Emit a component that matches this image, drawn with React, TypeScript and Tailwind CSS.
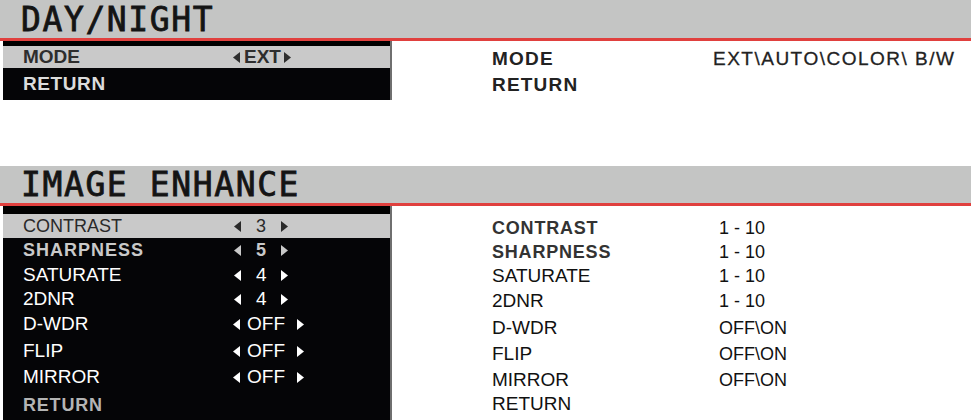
import React from "react";

type Row = {
  label: string;
  value?: string;
  kind?: "num" | "off" | "ext";
  h: number;
  tone: "light" | "white" | "dim" | "muted" | "strong" | "heavy";
};

function Left() {
  return (
    <svg width="7" height="11" viewBox="0 0 7 11" className="shrink-0">
      <path d="M7 0 L0 5.5 L7 11 Z" fill="currentColor" />
    </svg>
  );
}

function Right() {
  return (
    <svg width="7" height="11" viewBox="0 0 7 11" className="shrink-0">
      <path d="M0 0 L7 5.5 L0 11 Z" fill="currentColor" />
    </svg>
  );
}

function Value({ row }: { row: Row }) {
  if (!row.value) return null;
  if (row.kind === "num") {
    return (
      <div className="flex items-center">
        <span className="ml-[2px]"><Left /></span>
        <span className="ml-[15px] w-[10px] text-center">{row.value}</span>
        <span className="ml-[15px]"><Right /></span>
      </div>
    );
  }
  if (row.kind === "ext") {
    return (
      <div className="flex items-center">
        <span className="ml-[1px]"><Left /></span>
        <span className="ml-[4px]">{row.value}</span>
        <span className="ml-[3px]"><Right /></span>
      </div>
    );
  }
  return (
    <div className="flex items-center">
      <span className="ml-[1px]"><Left /></span>
      <span className="ml-[7px]">{row.value}</span>
      <span className="ml-[12px]"><Right /></span>
    </div>
  );
}

const toneClass = {
  light: "bg-[#c9c9c9] text-[#2a2a2a] text-[18px]",
  strong: "bg-[#c9c9c9] text-[#2e2e2e] text-[19px] font-bold",
  heavy: "bg-[#050507] text-[#dcdcdc] text-[19px] font-bold tracking-[0.6px]",
  white: "bg-[#050507] text-white text-[19px]",
  dim: "bg-[#050507] text-[#c9c9c9] text-[18px] font-bold tracking-[1px]",
  muted: "bg-[#050507] text-[#b4b4b4] text-[18px] font-bold tracking-[0.8px]",
};

function Menu({ top, rows }: { top: number; rows: Row[] }) {
  return (
    <div className="ml-[3px] w-[389px] self-start border-r-2 border-[#6f6f6f]">
      <div className="bg-black" style={{ height: top }} />
      {rows.map((r) => (
        <div
          key={r.label}
          className={`flex items-center pl-[20px] ${toneClass[r.tone]}`}
          style={{ height: r.h }}
        >
          <span className="w-[209px]">{r.label}</span>
          <Value row={r} />
        </div>
      ))}
    </div>
  );
}

function Header({ title, h }: { title: string; h: number }) {
  return (
    <>
      <div
        className="flex items-end bg-[#c4c5c4] pb-[2px] pl-[21px] text-[33px] leading-none tracking-[1.6px] text-[#141414] [-webkit-text-stroke:0.8px_#141414]"
        style={{ height: h, fontFamily: '"DejaVu Sans Mono", "Liberation Mono", monospace' }}
      >
        {title}
      </div>
      <div className="h-[3px] bg-[#e0403e]" />
    </>
  );
}

const enhanceRows: Row[] = [
  { label: "CONTRAST", value: "3", kind: "num", h: 24, tone: "light" },
  { label: "SHARPNESS", value: "5", kind: "num", h: 25, tone: "dim" },
  { label: "SATURATE", value: "4", kind: "num", h: 24, tone: "white" },
  { label: "2DNR", value: "4", kind: "num", h: 24, tone: "white" },
  { label: "D-WDR", value: "OFF", kind: "off", h: 27, tone: "white" },
  { label: "FLIP", value: "OFF", kind: "off", h: 26, tone: "white" },
  { label: "MIRROR", value: "OFF", kind: "off", h: 26, tone: "white" },
  { label: "RETURN", h: 30, tone: "muted" },
];

const enhanceInfo = [
  { label: "CONTRAST", range: "1 - 10", h: 24, bold: true },
  { label: "SHARPNESS", range: "1 - 10", h: 24, bold: true },
  { label: "SATURATE", range: "1 - 10", h: 25 },
  { label: "2DNR", range: "1 - 10", h: 24 },
  { label: "D-WDR", range: "OFF\\ON", h: 30 },
  { label: "FLIP", range: "OFF\\ON", h: 22 },
  { label: "MIRROR", range: "OFF\\ON", h: 30 },
  { label: "RETURN", range: "", h: 18 },
];

export default function App() {
  return (
    <div
      className="relative h-[420px] w-[971px] overflow-hidden bg-white text-[#1a1a1a]"
      style={{ fontFamily: '"Liberation Sans", Arial, sans-serif' }}
    >
      {/* day / night */}
      <section className="h-[166px]">
        <Header title="DAY/NIGHT" h={38} />
        <div className="flex">
          <Menu
            top={5}
            rows={[
              { label: "MODE", value: "EXT", kind: "ext", h: 22, tone: "strong" },
              { label: "RETURN", h: 32, tone: "heavy" },
            ]}
          />
          <div className="pl-[100px] pt-[5px] text-[19px] font-bold tracking-[1.2px] text-[#222]">
            <div className="flex h-[26px] items-center">
              <span className="w-[221px]">MODE</span>
              <span className="font-normal tracking-[1.5px] [-webkit-text-stroke:0.3px_#222]">EXT\AUTO\COLOR\ B/W</span>
            </div>
            <div className="flex h-[26px] items-center">RETURN</div>
          </div>
        </div>
      </section>

      {/* image enhance */}
      <section>
        <Header title="IMAGE ENHANCE" h={37} />
        <div className="flex">
          <Menu top={8} rows={enhanceRows} />
          <div className="pl-[100px] pt-[10px] text-[19px] text-[#111]">
            {enhanceInfo.map((r) => (
              <div key={r.label} className="flex items-center" style={{ height: r.h }}>
                <span className={`w-[227px] ${r.bold ? "text-[18px] font-bold tracking-[0.8px] text-[#333]" : ""}`}>
                  {r.label}
                </span>
                <span className="text-[18px]">{r.range}</span>
              </div>
            ))}
          </div>
        </div>
      </section>
    </div>
  );
}
